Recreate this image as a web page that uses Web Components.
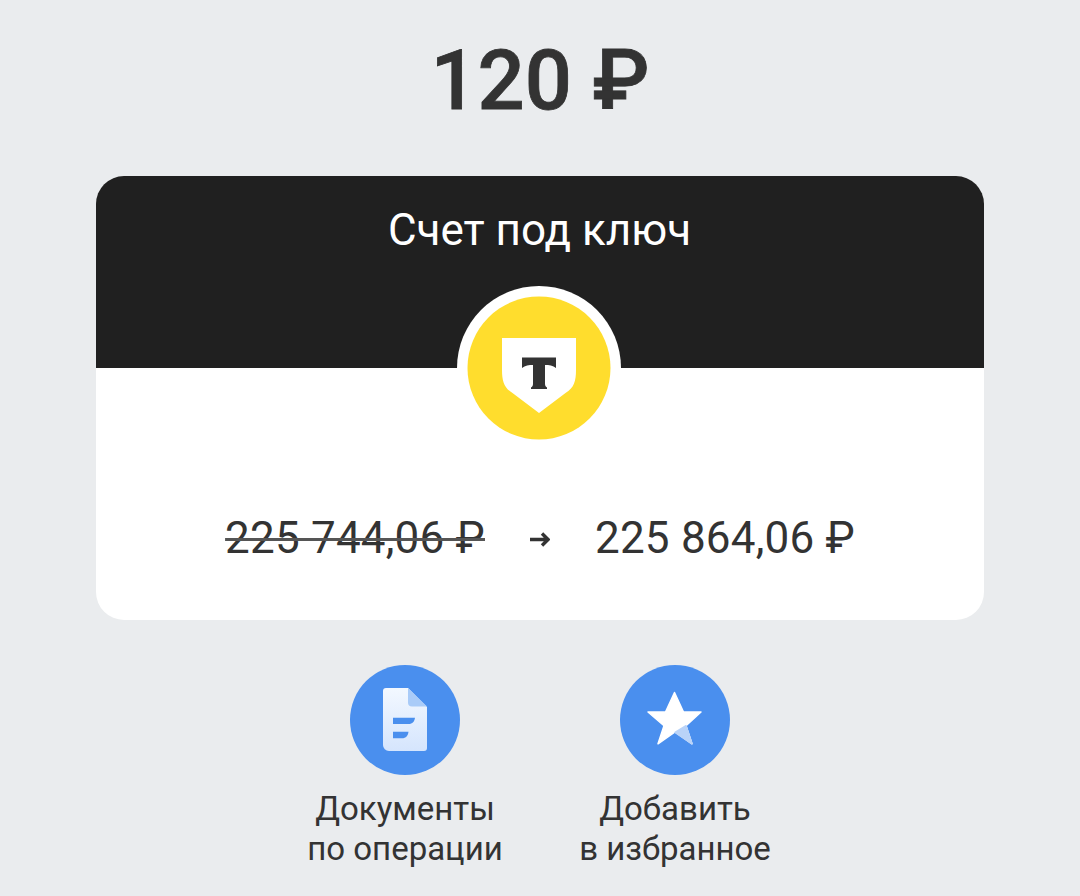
<!DOCTYPE html>
<html lang="ru">
<head>
<meta charset="utf-8">
<title>Счет под ключ</title>
<style>
  html, body { margin: 0; height: 100%; }
  body {
    background: #eaecee;
    color: #333333;
    font-family: Roboto, "Liberation Sans", sans-serif;
    overflow: hidden;
  }
</style>
</head>
<body>
<transfer-screen amount="120 ₽">
  <transfer-card title-text="Счет под ключ" old-value="225 744,06 ₽" new-value="225 864,06 ₽"></transfer-card>
  <action-button slot="actions">
    <svg slot="icon" viewBox="0 0 110 110" width="110" height="110">
      <defs>
        <linearGradient id="docfill" x1="0" y1="0" x2="0" y2="1">
          <stop offset="0" stop-color="#f3f8ff"/>
          <stop offset="1" stop-color="#d5e5fd"/>
        </linearGradient>
      </defs>
      <path d="M36 23h22l19 19v41a3 3 0 0 1-3 3H39a6 6 0 0 1-6-6V26a3 3 0 0 1 3-3z" fill="url(#docfill)"/>
      <path d="M58 23l19 18.500H62a4 4 0 0 1-4-4z" fill="#a9cbf8"/>
      <path d="M43 52.700h22c-.5 3.800-2.500 6.300-6.500 6.300H43z" fill="#4a8fee"/>
      <path d="M43 66.700h15.500c-.5 3.800-2.500 6.600-6.500 6.600h-9z" fill="#4a8fee"/>
    </svg>
    Документы<br>по операции
  </action-button>
  <action-button slot="actions">
    <svg slot="icon" viewBox="0 0 110 110" width="110" height="110">
      <path d="M54.500 27.500 63.500 47 81 47 66 60.700 72 78.800 55 67 38 78.800 44 60.700 28 47 45.500 47z" fill="#ffffff" stroke="#ffffff" stroke-width="1.500" stroke-linejoin="round"/>
      <path d="M66 60.700 72 78.800 55 67.500z" fill="#b9d3f8" stroke="#b9d3f8" stroke-width="1.500" stroke-linejoin="round"/>
    </svg>
    Добавить<br>в избранное
  </action-button>
</transfer-screen>

<script>
class transferScreen extends HTMLElement {
  constructor(){
    super()
    const shadowRoot = this.attachShadow({mode: 'open'})
    shadowRoot.innerHTML = `
      <style>
        :host{
          display: flex;
          flex-direction: column;
          align-items: center;
          width: 1080px;
          height: 896px;
        }
        h1{
          margin: 31px 0 0;
          font-size: 83px;
          line-height: 100px;
          font-weight: 500;
          -webkit-text-stroke: .8px #333333;
          color: #333333;
        }
        .actions{
          display: flex;
          margin-top: 45px;
        }
      </style>
      <h1>${this.getAttribute('amount')}</h1>
      <slot></slot>
      <div class="actions"><slot name="actions"></slot></div>
    `
  }
}

class transferCard extends HTMLElement {
  constructor(){
    super()
    const shadowRoot = this.attachShadow({mode: 'open'})
    shadowRoot.innerHTML = `
      <style>
        :host{
          display: block;
          position: relative;
          width: 888px;
          height: 444px;
          margin-top: 45px;
          border-radius: 28px;
          overflow: hidden;
          background: #ffffff;
        }
        .head{
          height: 192px;
          box-sizing: border-box;
          padding-top: 29px;
          background: #202020;
          color: #ffffff;
          text-align: center;
          font-size: 44px;
          line-height: 50px;
          padding-right: 1px;
        }
        .logo{
          position: absolute;
          left: 361px;
          top: 110px;
        }
        .prices{
          display: flex;
          justify-content: center;
          align-items: center;
          gap: 45px;
          margin-top: 144px;
          font-size: 44px;
          line-height: 52px;
          letter-spacing: .2px;
          color: #333333;
        }
        s{
          text-decoration-thickness: 3px;
          text-decoration-color: #555555;
        }
        .arrow{
          flex: none;
          margin-top: 2px;
        }
      </style>
      <div class="head">${this.getAttribute('title-text')}</div>
      <svg class="logo" viewBox="0 0 164 164" width="164" height="164">
        <circle cx="82" cy="82" r="82" fill="#ffffff"/>
        <circle cx="82" cy="82" r="71.500" fill="#ffdd2d"/>
        <path d="M45 52h74v32c0 11-2 18-10.500 23L82 127l-26.500-20C47 102 45 95 45 84z" fill="#ffffff"/>
        <path d="M65 71.500H99V82C96 79.500 92 79 88 79V98C88 100 89 101 90 101.500V103H74V101.500C75 101 76 100 76 98V79C72 79 68 79.500 65 82Z" fill="#333333"/>
      </svg>
      <div class="prices">
        <s>${this.getAttribute('old-value')}</s>
        <svg class="arrow" viewBox="0 0 20 15" width="20" height="15">
          <path d="M0 7.500H18M12 1.500 18 7.500 12 13.500" fill="none" stroke="#333333" stroke-width="3.400"/>
        </svg>
        <span>${this.getAttribute('new-value')}</span>
      </div>
    `
  }
}

class actionButton extends HTMLElement {
  constructor(){
    super()
    const template = document.createElement('template')
    template.innerHTML = `
      <style>
        :host{
          display: flex;
          flex-direction: column;
          align-items: center;
          width: 270px;
          font-size: 33px;
          line-height: 40px;
          color: #333333;
          text-align: center;
        }
        .circle{
          width: 110px;
          height: 110px;
          margin-bottom: 14px;
          border-radius: 50%;
          background: #4a8fee;
        }
      </style>
      <div class="circle"><slot name="icon"></slot></div>
      <slot></slot>
    `
    const shadowRoot = this.attachShadow({mode: 'open'})
    shadowRoot.appendChild(template.content.cloneNode(true))
  }
}

window.customElements.define('transfer-screen', transferScreen)
window.customElements.define('transfer-card', transferCard)
window.customElements.define('action-button', actionButton)
</script>
</body>
</html>
